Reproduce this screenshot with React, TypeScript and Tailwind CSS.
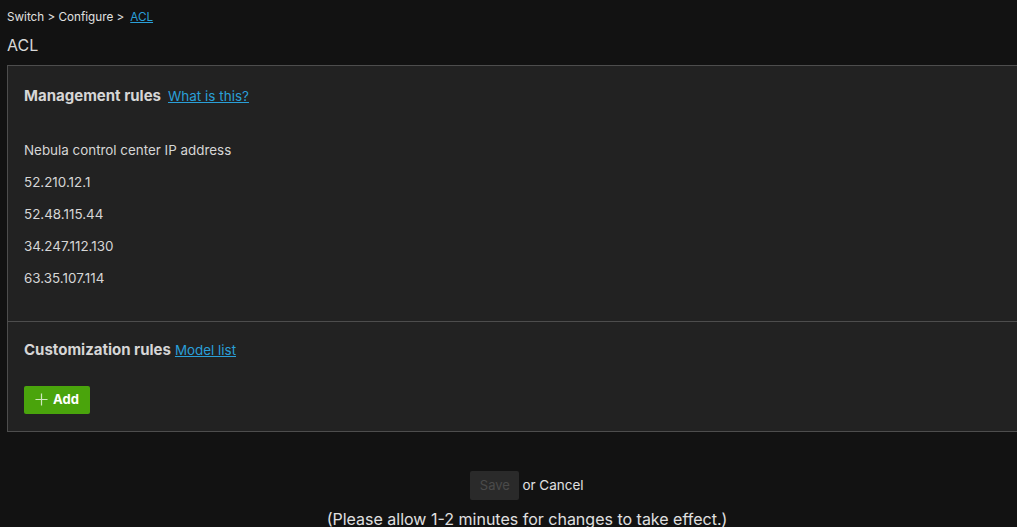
import React from 'react';

const ips = ['52.210.12.1', '52.48.115.44', '34.247.112.130', '63.35.107.114'];

const PlusIcon: React.FC<{ className?: string }> = ({ className }) => (
  <svg viewBox="0 0 14 14" className={className} fill="none" stroke="currentColor" strokeWidth="1.3">
    <path d="M7 0.5v13M0.5 7h13" />
  </svg>
);

const App: React.FC = () => {
  return (
    <div className="w-full h-screen overflow-hidden bg-[#121212] text-[#d6d6d6]" style={{ fontFamily: 'Inter, "Noto Sans", sans-serif' }}>
      <div className="w-[1054px]">
        {/* breadcrumb */}
        <div className="h-[34px] pl-[7px] pt-[10px] text-[11.7px] leading-[14px] text-[#e0e0e0]">
          Switch &gt; Configure &gt;
          <a href="#" className="ml-[6px] text-[#2a9fd8] underline">ACL</a>
        </div>
        <h1 className="pl-[7px] h-[31px] text-[16px] leading-[22px] text-[#d8d8d8]">ACL</h1>

        <div className="mx-[7px] border border-[#4d4d4d] bg-[#222222]">
          <section className="h-[255px] px-[16px] pt-[19px]">
            <div className="flex items-baseline gap-[7px]">
              <h2 className="text-[15px] font-bold text-[#d6d6d6]">Management rules</h2>
              <a href="#" className="text-[13.5px] text-[#2a9fd8] underline">What is this?</a>
            </div>
            <p className="mt-[32px] text-[13.4px] leading-[20px]">Nebula control center IP address</p>
            <ul className="mt-[12px] flex flex-col gap-[12px] text-[13.4px] leading-[20px]">
              {ips.map((ip) => (
                <li key={ip}>{ip}</li>
              ))}
            </ul>
          </section>
          <section className="h-[110px] border-t border-[#4d4d4d] px-[16px] pt-[17px]">
            <div className="flex items-baseline gap-[4px]">
              <h2 className="text-[15px] font-bold text-[#d6d6d6]">Customization rules</h2>
              <a href="#" className="text-[13.4px] text-[#2a9fd8] underline">Model list</a>
            </div>
            <button className="mt-[24px] flex h-[28px] w-[66px] items-center justify-center gap-[5px] rounded-[2px] bg-[#4aa40c] text-[13px] font-bold text-white">
              <PlusIcon className="h-[13px] w-[13px] text-[#cfe8bf]" />
              Add
            </button>
          </section>
        </div>

        <div className="mt-[39px] flex items-center justify-center gap-[3px] text-[13.5px]">
          <button className="h-[29px] w-[49px] rounded-[2px] bg-[#2a2a2a] text-[13px] text-[#4a4a4a]">Save</button>
          <span className="text-[#e0e0e0]">or Cancel</span>
        </div>
        <p className="mt-[8px] text-center text-[16px] leading-[22px] text-[#e0e0e0]">(Please allow 1-2 minutes for changes to take effect.)</p>
      </div>
    </div>
  );
};

export default App;
